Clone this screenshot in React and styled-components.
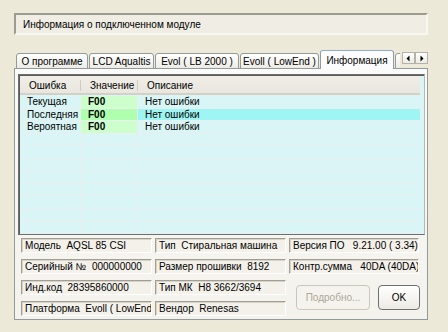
import React from 'react';
import styled, { createGlobalStyle } from 'styled-components';

const GlobalStyle = createGlobalStyle`
    html, body {
        margin: 0;
        padding: 0;
        background: #ECE9D8;
    }
    body {
        font-family: "Liberation Sans", Arial, sans-serif;
        font-size: 10px;
        color: #000;
    }
`;

const tabs = [
    { label: 'О программе', width: 72 },
    { label: 'LCD Aqualtis', width: 65 },
    { label: 'Evol ( LB 2000 )', width: 84 },
    { label: 'Evoll ( LowEnd )', width: 79 },
    { label: 'Информация', width: 74, active: true },
    { label: 'Архив', width: 50 },
];

const errors = [
    { name: 'Текущая', value: 'F00', text: 'Нет ошибки' },
    { name: 'Последняя', value: 'F00', text: 'Нет ошибки', selected: true },
    { name: 'Вероятная', value: 'F00', text: 'Нет ошибки' },
];

const info = [
    'Модель  AQSL 85 CSI',
    'Тип  Стиральная машина',
    'Версия ПО   9.21.00 ( 3.34)',
    'Серийный №  000000000',
    'Размер прошивки  8192',
    'Контр.сумма   40DA (40DA)',
    'Инд.код  28395860000',
    'Тип МК  H8 3662/3694',
    null,
    'Платформа  Evoll ( LowEnd',
    'Вендор  Renesas',
];

const App = () => {
    return (
        <>
            <GlobalStyle />
            <Window>
                <InfoField>Информация о подключенном модуле</InfoField>

                <TabRow>
                    <TabStrip>
                        {tabs.map((t) => (
                            <Tab key={t.label} $active={t.active} $width={t.width}>{t.label}</Tab>
                        ))}
                    </TabStrip>
                    <Scroller>
                        <ScrollButton>
                            <svg width="7" height="7" viewBox="0 0 7 7"><path d="M4.5 0.5 L1.5 3.5 L4.5 6.5 Z" fill="#000" /></svg>
                        </ScrollButton>
                        <ScrollButton>
                            <svg width="7" height="7" viewBox="0 0 7 7"><path d="M2.5 0.5 L5.5 3.5 L2.5 6.5 Z" fill="#000" /></svg>
                        </ScrollButton>
                    </Scroller>
                </TabRow>

                <Panel>
                    <Grid>
                        <HeaderRow>
                            <HeadCell>Ошибка</HeadCell>
                            <HeadCell>Значение</HeadCell>
                            <HeadCell>Описание</HeadCell>
                        </HeaderRow>
                        {errors.map((e) => (
                            <Row key={e.name}>
                                <Cell $bg="#D9F5F5">{e.name}</Cell>
                                <Cell $bg={e.selected ? '#AEFFAE' : '#CCFFCC'} $bold>{e.value}</Cell>
                                <Cell $bg={e.selected ? '#9EF6F4' : '#D9F5F5'}>{e.text}</Cell>
                            </Row>
                        ))}
                        {Array.from({ length: 8 }).map((_, i) => (
                            <Row key={i}>
                                <Cell $bg="#D9F5F5" />
                                <Cell $bg="#D9F5F5" />
                                <Cell $bg="#D9F5F5" />
                            </Row>
                        ))}
                    </Grid>

                    <InfoGrid>
                        {info.map((txt, i) =>
                            txt === null ? (
                                <Buttons key={i}>
                                    <Button disabled $wide>Подробно...</Button>
                                    <Button>OK</Button>
                                </Buttons>
                            ) : (
                                <InfoCell key={i}>{txt}</InfoCell>
                            )
                        )}
                    </InfoGrid>
                </Panel>
            </Window>
        </>
    );
};

export default App;


/* Styled Components */
const Window = styled.div`
    width: 448px;
    height: 332px;
    box-sizing: border-box;
    padding: 13px 20px 0 14px;
    overflow: hidden;
`;

const InfoField = styled.div`
    height: 22px;
    box-sizing: border-box;
    border: 2px solid;
    border-color: #9D9A8E #F8F7F2 #F8F7F2 #9D9A8E;
    background: #EFEDE4;
    padding: 3px 0 0 7px;
    line-height: 14px;
    white-space: nowrap;
`;

const TabRow = styled.div`
    display: flex;
    align-items: flex-end;
    height: 19px;
    margin-top: 15px;
    margin-bottom: -1px;
    position: relative;
    z-index: 1;
`;

const TabStrip = styled.div`
    display: flex;
    align-items: flex-end;
    gap: 1px;
    padding-left: 2px;
    width: 386px;
    overflow: hidden;
    height: 19px;
`;

const Tab = styled.div`
    flex: none;
    width: ${(p) => p.$width}px;
    height: ${(p) => (p.$active ? '19px' : '16px')};
    box-sizing: border-box;
    padding-top: ${(p) => (p.$active ? '3px' : '1px')};
    border: 1px solid #919B9C;
    border-bottom: ${(p) => (p.$active ? 'none' : '1px solid #919B9C')};
    border-top-color: ${(p) => (p.$active ? '#8FA9CF' : '#919B9C')};
    border-radius: 3px 3px 0 0;
    background: ${(p) => (p.$active ? '#FCFCFE' : 'linear-gradient(#FFFFFF, #ECEBE6)')};
    line-height: 13px;
    text-align: center;
    white-space: nowrap;
    overflow: hidden;
    position: relative;
    z-index: ${(p) => (p.$active ? 2 : 1)};
`;

const Scroller = styled.div`
    display: flex;
    margin: 0 0 5px 2px;
`;

const ScrollButton = styled.div`
    width: 13px;
    height: 12px;
    box-sizing: border-box;
    border: 1px solid #B5B3A8;
    background: linear-gradient(#FFFFFF, #EDEBE4);
    display: flex;
    align-items: center;
    justify-content: center;
`;

const Panel = styled.div`
    height: 252px;
    box-sizing: border-box;
    border: 1px solid #919B9C;
    background: linear-gradient(#FBFBF9, #F3F2EC);
    padding: 5px 2px 0 3px;
`;

const Grid = styled.div`
    height: 161px;
    box-sizing: border-box;
    border: 1px solid #6E6E6E;
    border-right-color: #B9B7AE;
    box-shadow: inset 1px 1px 0 #5B5B5B;
    background: #D9F5F5;
    overflow: hidden;
    padding: 1px 4px 0 1px;
`;

const HeaderRow = styled.div`
    display: grid;
    grid-template-columns: 61px 57px 1fr;
    height: 19px;
    box-sizing: border-box;
    background: linear-gradient(#F0EEE7, #E9E6DE);
    border-bottom: 2px solid #D4D0C6;
    margin-bottom: 1px;
`;

const HeadCell = styled.div`
    padding: 3px 0 0 9px;
    line-height: 13px;
    position: relative;
    &:not(:first-child)::before {
        content: '';
        position: absolute;
        left: -1px;
        top: 4px;
        height: 11px;
        width: 1px;
        background: #CFCBC0;
    }
`;

const Row = styled.div`
    display: grid;
    grid-template-columns: 61px 57px 1fr;
    height: 12.5px;
    box-sizing: border-box;
    border-bottom: 1px solid #E9EEEE;
`;

const Cell = styled.div`
    background: ${(p) => p.$bg};
    font-weight: ${(p) => (p.$bold ? 'bold' : 'normal')};
    padding-left: 7px;
    line-height: 11px;
    white-space: nowrap;
    overflow: hidden;
    border-right: 1px solid #E9EEEE;
    &:last-child {
        border-right: none;
    }
`;

const InfoGrid = styled.div`
    display: grid;
    grid-template-columns: 131px 131px 130px;
    grid-auto-rows: 15px;
    column-gap: 3px;
    row-gap: 6px;
    margin: 3px 0 0 3px;
`;

const InfoCell = styled.div`
    box-sizing: border-box;
    border: 1px solid;
    border-color: #A19E94 #FFFFFF #FFFFFF #A19E94;
    box-shadow: inset 1px 1px 0 #D6D3CA;
    background: #F3F1EA;
    padding-left: 3px;
    line-height: 13px;
    white-space: pre;
    overflow: hidden;
`;

const Buttons = styled.div`
    grid-row: span 2;
    display: flex;
    align-items: flex-start;
    justify-content: flex-end;
    gap: 8px;
    padding: 5px 0 0 0;
`;

const Button = styled.button`
    width: ${(p) => (p.$wide ? '74px' : '42px')};
    height: 25px;
    box-sizing: border-box;
    border: 1px solid ${(p) => (p.disabled ? '#C9C7BA' : '#6F6F6F')};
    border-radius: 4px;
    background: ${(p) => (p.disabled ? '#F4F3EE' : 'linear-gradient(#FFFFFF, #ECEBE4)')};
    color: ${(p) => (p.disabled ? '#ACA899' : '#000')};
    font-family: "Liberation Sans", Arial, sans-serif;
    font-size: 10px;
    padding: 0;
    margin-right: ${(p) => (p.$wide ? '0' : '-1px')};
`;
